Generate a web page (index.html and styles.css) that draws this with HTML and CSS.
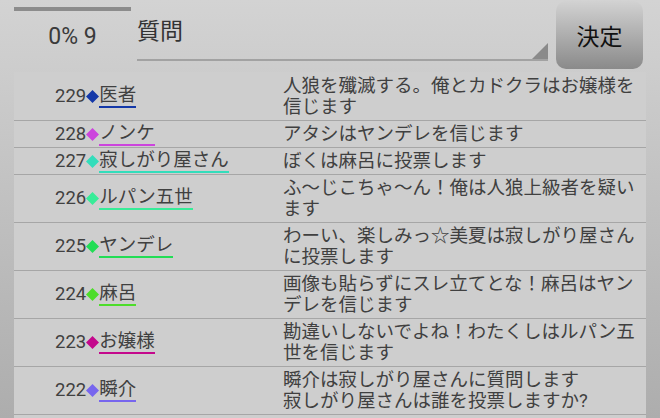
FILE: index.html
```html
<!DOCTYPE html>
<html lang="ja">
<head>
    <meta charset="UTF-8">
    <meta name="viewport" content="width=device-width, initial-scale=1.0">
    <title>投票</title>
    <link rel="stylesheet" href="styles.css">
</head>
<body>

<div class="header">
    <div class="progress">
        <div class="bar"></div>
        <div class="count">0% 9</div>
    </div>
    <div class="question">
        <span>質問</span>
        <div class="corner"></div>
    </div>
    <button class="ok-btn">決定</button>
</div>

<div class="log">
    <div class="row">
        <div class="who"><span class="num">229</span><svg class="dia blue" viewBox="0 0 13 13"><polygon points="6.5,0 13,6.5 6.5,13 0,6.5"/></svg><span class="name blue">医者</span></div>
        <div class="msg">人狼を殲滅する。俺とカドクラはお嬢様を<br>信じます</div>
    </div>
    <div class="row">
        <div class="who"><span class="num">228</span><svg class="dia pink" viewBox="0 0 13 13"><polygon points="6.5,0 13,6.5 6.5,13 0,6.5"/></svg><span class="name pink">ノンケ</span></div>
        <div class="msg">アタシはヤンデレを信じます</div>
    </div>
    <div class="row">
        <div class="who"><span class="num">227</span><svg class="dia teal" viewBox="0 0 13 13"><polygon points="6.5,0 13,6.5 6.5,13 0,6.5"/></svg><span class="name teal">寂しがり屋さん</span></div>
        <div class="msg">ぼくは麻呂に投票します</div>
    </div>
    <div class="row">
        <div class="who"><span class="num">226</span><svg class="dia mint" viewBox="0 0 13 13"><polygon points="6.5,0 13,6.5 6.5,13 0,6.5"/></svg><span class="name mint">ルパン五世</span></div>
        <div class="msg">ふ〜じこちゃ〜ん！俺は人狼上級者を疑い<br>ます</div>
    </div>
    <div class="row">
        <div class="who"><span class="num">225</span><svg class="dia green" viewBox="0 0 13 13"><polygon points="6.5,0 13,6.5 6.5,13 0,6.5"/></svg><span class="name green">ヤンデレ</span></div>
        <div class="msg">わーい、楽しみっ☆美夏は寂しがり屋さん<br>に投票します</div>
    </div>
    <div class="row">
        <div class="who"><span class="num">224</span><svg class="dia lime" viewBox="0 0 13 13"><polygon points="6.5,0 13,6.5 6.5,13 0,6.5"/></svg><span class="name lime">麻呂</span></div>
        <div class="msg">画像も貼らずにスレ立てとな！麻呂はヤン<br>デレを信じます</div>
    </div>
    <div class="row">
        <div class="who"><span class="num">223</span><svg class="dia berry" viewBox="0 0 13 13"><polygon points="6.5,0 13,6.5 6.5,13 0,6.5"/></svg><span class="name berry">お嬢様</span></div>
        <div class="msg">勘違いしないでよね！わたくしはルパン五<br>世を信じます</div>
    </div>
    <div class="row">
        <div class="who"><span class="num">222</span><svg class="dia violet" viewBox="0 0 13 13"><polygon points="6.5,0 13,6.5 6.5,13 0,6.5"/></svg><span class="name violet">瞬介</span></div>
        <div class="msg">瞬介は寂しがり屋さんに質問します<br>寂しがり屋さんは誰を投票しますか?</div>
    </div>
</div>

</body>
</html>
```

FILE: styles.css
```css
html, body {
    height: 100%;
}
body {
    margin: 0;
    overflow: hidden;
    font-family: Roboto, "Noto Sans CJK JP", sans-serif;
    color: #404040;
    background: linear-gradient(#d3d3d3, #adadad);
}

/* barre du haut */
.header {
    display: flex;
    height: 72px;
    padding-left: 14px;
}
.progress {
    width: 117px;
}
.bar {
    height: 4px;
    margin-top: 7px;
    background-color: #8c8c8c;
}
.count {
    margin-top: 11px;
    font-size: 23px;
    line-height: 30px;
    text-align: center;
    color: #3a3a3a;
}
.question {
    position: relative;
    width: 411px;
    height: 59px;
    margin-left: 6px;
    padding-top: 0;
    border-bottom: 2px solid #a2a2a2;
    font-size: 23px;
    line-height: 30px;
    color: #333;
    box-sizing: content-box;
}
.question span {
    display: block;
    padding-top: 17px;
}
.corner {
    position: absolute;
    right: 0;
    bottom: 0;
    width: 0;
    height: 0;
    border-left: 16px solid transparent;
    border-bottom: 16px solid #8a8a8a;
}
.ok-btn {
    width: 87px;
    height: 68px;
    margin: 1px 0 0 8px;
    border: none;
    border-radius: 10px;
    background: linear-gradient(#d2d2d2, #8a8a8a);
    font-family: inherit;
    font-size: 23px;
    color: #111;
    padding: 0;
}

/* journal des votes */
.log {
    margin: 0 14px;
    padding-top: 1px;
    min-height: 400px;
    background-color: #cecece;
}
.row {
    display: flex;
    border-bottom: 1px solid #a6a6a6;
    font-size: 18.5px;
}
.who {
    width: 228px;
    padding-left: 41px;
    display: flex;
    align-items: center;
}
.num {
    line-height: 21px;
}
.dia {
    width: 13px;
    height: 13px;
    flex: none;
}
.name {
    display: inline-block;
    line-height: 21px;
    border-bottom: 2px solid;
    color: #404040;
}
.msg {
    flex: 1;
    padding: 3px 0 2px;
    line-height: 21px;
    white-space: nowrap;
}

.blue { fill: #1438a8; border-color: #1438a8; }
.pink { fill: #cc44dd; border-color: #cc44dd; }
.teal { fill: #33ddbb; border-color: #33ddbb; }
.mint { fill: #38ec98; border-color: #38ec98; }
.green { fill: #22dd55; border-color: #22dd55; }
.lime { fill: #4ddd2a; border-color: #4ddd2a; }
.berry { fill: #c4088c; border-color: #c4088c; }
.violet { fill: #7766ee; border-color: #7766ee; }
```
